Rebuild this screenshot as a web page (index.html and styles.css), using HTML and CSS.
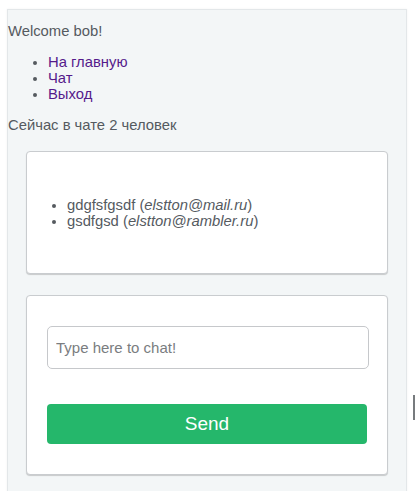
FILE: index.html
```html
<!DOCTYPE html>
<html>
<head>
<meta charset="utf-8">
<link rel="stylesheet" href="styles.css">
</head>
<body>
<div class="page">
  <p class="welcome">Welcome bob!</p>
  <ul class="nav">
    <li><a href="#">На главную</a></li>
    <li><a href="#">Чат</a></li>
    <li><a href="#">Выход</a></li>
  </ul>
  <p class="online">Сейчас в чате 2 человек</p>
  <div class="card users">
    <ul class="user-list">
      <li>gdgfsfgsdf (<em>elstton@mail.ru</em>)</li>
      <li>gsdfgsd (<em>elstton@rambler.ru</em>)</li>
    </ul>
  </div>
  <div class="card composer">
    <input class="chat-input" type="text" placeholder="Type here to chat!">
    <button class="send">Send</button>
  </div>
</div>
<div class="edge-mark"></div>
</body>
</html>
```

FILE: styles.css
```css
html, body {
  margin: 0;
  background: #ffffff;
}
body {
  padding: 9px 8px 0 7px;
  font-family: "Liberation Sans", Arial, sans-serif;
  font-size: 14.8px;
  line-height: 16px;
  color: #555a5f;
}
.page {
  background: #f3f6f7;
  border: 1px solid #e3e7e9;
  border-bottom: none;
  box-shadow: 0 0 2px rgba(0,0,0,0.06);
  width: 398px;
  padding: 0 0 17px 0;
}
.page p {
  margin: 15px 0;
}
.welcome {
  margin-top: 13px !important;
}
.nav {
  margin: 15px 0 14px 0;
  padding-left: 40px;
}
.nav a {
  color: #551a8b;
  text-decoration: none;
}
.online {
  margin-bottom: 0 !important;
}
.card {
  background: #ffffff;
  border: 1px solid #c9cccf;
  border-radius: 4px;
  box-shadow: 0 1px 1px rgba(0,0,0,0.18);
  margin: 18px 18px 0 18px;
}
.users {
  padding: 30px 0 29px 0;
}
.user-list {
  margin: 15px 0;
  padding-left: 40px;
}
.composer {
  margin-top: 21px;
  padding: 30px 19px 30px 20px;
  display: flex;
  flex-direction: column;
  gap: 35px;
}
.chat-input {
  height: 43px;
  box-sizing: border-box;
  border: 1px solid #c6c8cb;
  border-radius: 5px;
  padding: 0 8px;
  font-family: "Liberation Sans", Arial, sans-serif;
  font-size: 15px;
  color: #555;
  outline: none;
  width: 322px;
}
.chat-input::placeholder {
  color: #7a7d80;
}
.send {
  height: 40px;
  width: 320px;
  border: none;
  border-radius: 4px;
  background: #25b76b;
  color: #ffffff;
  font-family: "Liberation Sans", Arial, sans-serif;
  font-size: 19px;
}
.edge-mark {
  position: absolute;
  left: 413px;
  top: 395px;
  width: 2px;
  height: 25px;
  background: #777b7e;
}
```
